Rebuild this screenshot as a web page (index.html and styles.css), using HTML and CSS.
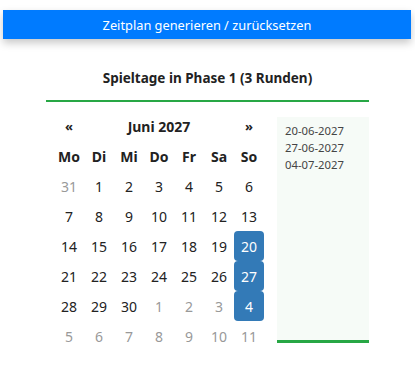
FILE: index.html
```html
<!DOCTYPE html>
<html lang="de">
<head>
<meta charset="utf-8">
<link rel="stylesheet" href="styles.css">
</head>
<body>
<button class="btn">Zeitplan generieren / zurücksetzen</button>
<div class="wrap">
  <div class="title">Spieltage in Phase 1 (3 Runden)</div>
  <div class="body">
    <table class="cal">
      <thead>
        <tr class="head"><th class="nav">«</th><th colspan="5" class="month">Juni 2027</th><th class="nav">»</th></tr>
        <tr class="dow"><th>Mo</th><th>Di</th><th>Mi</th><th>Do</th><th>Fr</th><th>Sa</th><th>So</th></tr>
      </thead>
      <tbody>
        <tr><td class="old">31</td><td>1</td><td>2</td><td>3</td><td>4</td><td>5</td><td>6</td></tr>
        <tr><td>7</td><td>8</td><td>9</td><td>10</td><td>11</td><td>12</td><td>13</td></tr>
        <tr><td>14</td><td>15</td><td>16</td><td>17</td><td>18</td><td>19</td><td class="act">20</td></tr>
        <tr><td>21</td><td>22</td><td>23</td><td>24</td><td>25</td><td>26</td><td class="act">27</td></tr>
        <tr><td>28</td><td>29</td><td>30</td><td class="old">1</td><td class="old">2</td><td class="old">3</td><td class="act">4</td></tr>
        <tr><td class="old">5</td><td class="old">6</td><td class="old">7</td><td class="old">8</td><td class="old">9</td><td class="old">10</td><td class="old">11</td></tr>
      </tbody>
    </table>
    <div class="list">
      <div>20-06-2027</div>
      <div>27-06-2027</div>
      <div>04-07-2027</div>
    </div>
  </div>
</div>
</body>
</html>
```
FILE: styles.css
```css
html, body { margin: 0; padding: 0; background: #fff; }
body { font-family: "Noto Sans", "Open Sans", sans-serif; color: #222; }
.btn {
  display: block;
  box-sizing: border-box;
  width: 408px;
  height: 29px;
  margin: 10px 0 0 3px;
  padding: 0;
  border: none;
  background: #007bff;
  color: #fff;
  font-family: inherit;
  font-size: 12.8px;
  box-shadow: 0 4px 8px rgba(0,0,0,0.22);
}
.wrap { width: 323px; margin: 29px auto 0; }
.title {
  text-align: center;
  font-weight: bold;
  font-size: 13.5px;
  line-height: 20px;
  padding-bottom: 12px;
  border-bottom: 2px solid #28a745;
  color: #222;
}
.body { display: flex; align-items: flex-start; margin-top: 9px; }
.cal {
  border-collapse: separate;
  border-spacing: 0;
  margin-left: 8px;
  font-size: 14px;
}
.cal th, .cal td {
  width: 30px;
  height: 30px;
  padding: 0;
  text-align: center;
  box-sizing: border-box;
}
.cal th { font-weight: bold; color: #222; }
.cal .month { width: 150px; }
.cal .nav { font-size: 13px; }
.cal td { color: #222; }
.cal td.old { color: #999; }
.cal td.act { background: #337ab7; color: #fff; border-radius: 4px; }
.list {
  box-sizing: border-box;
  width: 92px;
  height: 226px;
  margin: 6px 0 0 13px;
  padding: 5px 8px;
  background: #f6fbf7;
  border-bottom: 3px solid #28a745;
  font-size: 11.3px;
  line-height: 17px;
  color: #444;
}
```
